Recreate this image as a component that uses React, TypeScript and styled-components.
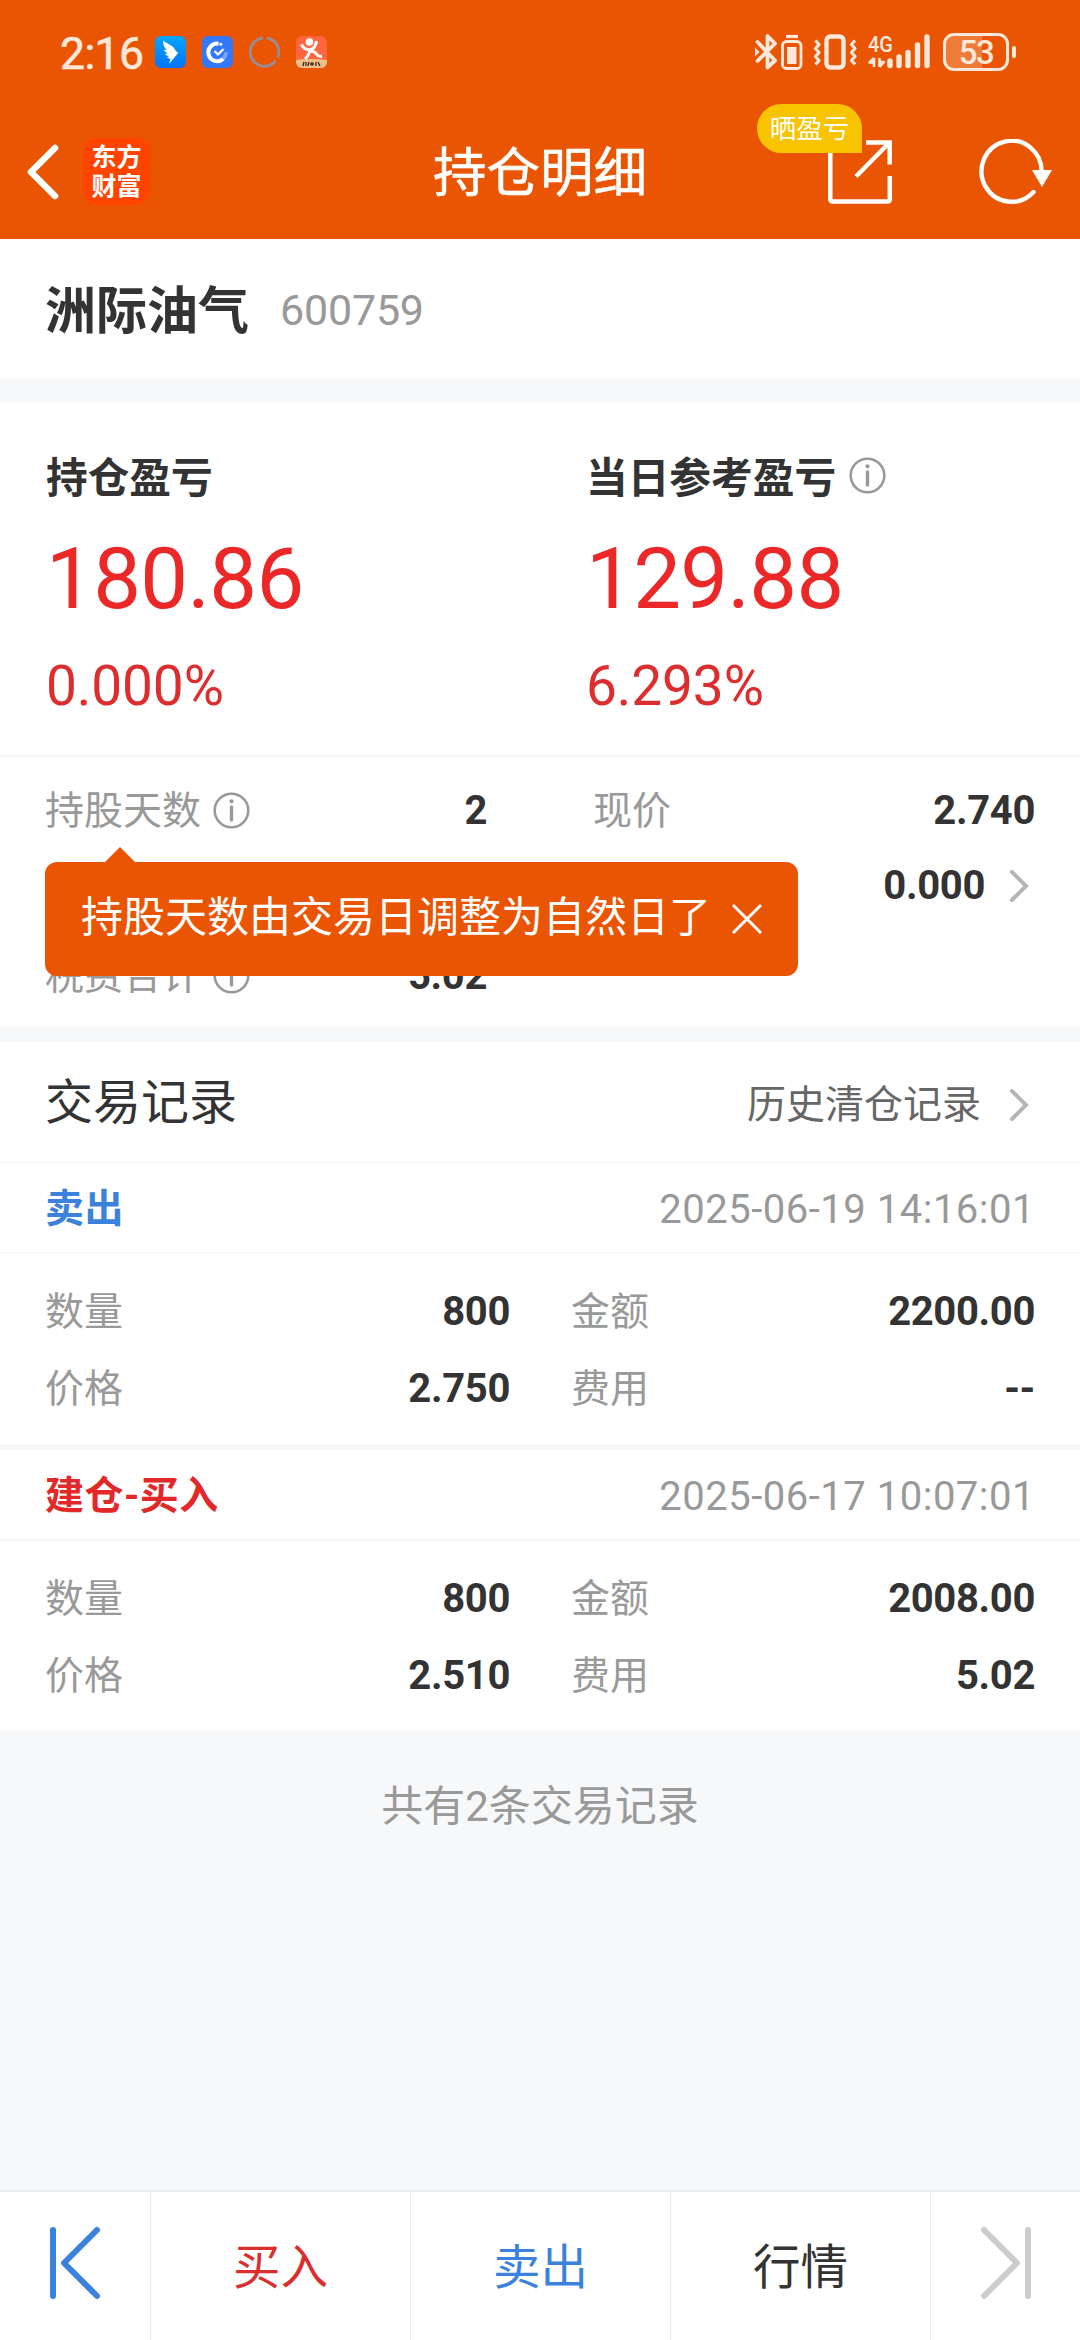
import React from "react";
import styled, { createGlobalStyle } from "styled-components";

const FONT = `Roboto, "Noto Sans CJK SC", sans-serif`;
const ORANGE = "#ea5504";
const RED = "#ec2727";
const BLUE = "#3a82dc";
const INK = "#333333";
const MUTED = "#999999";
const PAPER = "#ffffff";
const GAP = "#f6f8fa";
const HAIR = "#f7f8f9";
const STATUS = "#fee8da";

const GlobalStyle = createGlobalStyle`
  *, *::before, *::after { box-sizing: border-box; }
  html, body { margin: 0; padding: 0; background: ${GAP}; }
  body { font-family: ${FONT}; color: ${INK}; }
  svg { display: block; flex: none; }
  button { font: inherit; color: inherit; background: none; border: 0; padding: 0; margin: 0; }
`;

const Screen = styled.main`
  width: 1080px;
  height: 2340px;
  display: flex;
  flex-direction: column;
  background: ${GAP};
  overflow: hidden;
`;

const Header = styled.header`
  height: 239px;
  flex: none;
  background: ${ORANGE};
  color: ${PAPER};
`;

const StatusBar = styled.div`
  height: 104px;
  padding: 0 64px 0 60px;
  display: flex;
  justify-content: space-between;
  align-items: center;
  color: ${STATUS};
`;

const StatusSide = styled.div<{ $gap: number }>`
  display: flex;
  align-items: center;
  gap: ${(p) => p.$gap}px;
`;

const Clock = styled.time`
  width: 95px;
  font-size: 44.5px;
  line-height: 52px;
  padding-top: 3px;
  letter-spacing: -0.6px;
  -webkit-text-stroke: 0.6px ${STATUS};
  white-space: nowrap;
`;

const Battery = styled.div`
  width: 66px;
  height: 38px;
  border: 3px solid ${STATUS};
  border-radius: 11px;
  background: linear-gradient(90deg, #ee7b39 0 60%, transparent 60%);
  font-size: 33px;
  font-weight: 500;
  line-height: 33px;
  text-align: center;
  letter-spacing: -1.5px;
`;

const BatteryWrap = styled.div`
  display: flex;
  align-items: center;
  gap: 3px;
  margin-left: 12px;
`;

const BatteryTip = styled.span`
  width: 4px;
  height: 12px;
  border-radius: 2px;
  background: ${STATUS};
`;

const NavBar = styled.div`
  height: 135px;
  display: grid;
  grid-template-columns: 400px 1fr 400px;
  align-items: center;
`;

const NavLeft = styled.div`
  display: flex;
  align-items: center;
  gap: 22px;
  padding-left: 26px;
`;

const NavRight = styled.div`
  display: flex;
  align-items: center;
  justify-content: flex-end;
  gap: 87px;
  padding-right: 27px;
`;

const Title = styled.h1`
  margin: 0;
  padding-top: 5px;
  text-align: center;
  font-size: 53.5px;
  line-height: 70px;
  font-weight: 400;
  -webkit-text-stroke: 0.6px ${PAPER};
  white-space: nowrap;
`;

const Brand = styled.div`
  width: 67px;
  height: 67px;
  border-radius: 14px;
  background: #ff4400;
  display: flex;
  flex-direction: column;
  align-items: center;
  justify-content: center;
  font-size: 25px;
  line-height: 29px;
  font-weight: 700;
`;

const ShareButton = styled.button`
  position: relative;
`;

const Badge = styled.span`
  position: absolute;
  right: 30px;
  top: -36px;
  width: 105px;
  height: 49px;
  border-radius: 25px 25px 0 25px;
  background: #f8c301;
  color: ${PAPER};
  font-size: 26.5px;
  line-height: 49px;
  text-align: center;
  white-space: nowrap;
`;

const StockBar = styled.section`
  height: 140px;
  flex: none;
  display: flex;
  align-items: center;
  gap: 31px;
  padding: 0 45px;
  background: ${PAPER};
`;

const StockName = styled.h2`
  margin: 0;
  padding-top: 5px;
  font-size: 51px;
  line-height: 60px;
  font-weight: 700;
`;

const StockCode = styled.span`
  font-size: 43px;
  line-height: 60px;
  letter-spacing: -0.2px;
  padding-top: 2px;
  color: ${MUTED};
`;

const Holding = styled.section`
  margin-top: 24px;
  height: 624px;
  flex: none;
  background: ${PAPER};
`;

const ProfitGrid = styled.div`
  height: 354px;
  display: grid;
  grid-template-columns: 540px 540px;
  border-bottom: 2px solid ${HAIR};
`;

const ProfitCell = styled.div`
  padding: 42px 0 0 46px;
`;

const ProfitLabel = styled.div`
  height: 60px;
  display: flex;
  align-items: center;
  gap: 13px;
  font-size: 41.7px;
  font-weight: 700;
`;

const ProfitValue = styled.div`
  height: 100px;
  margin-top: 24px;
  font-size: 85px;
  line-height: 100px;
  letter-spacing: -0.6px;
  color: ${RED};
`;

const ProfitRate = styled.div`
  margin-top: 24px;
  font-size: 55px;
  line-height: 66px;
  letter-spacing: -0.1px;
  color: #dc2e2e;
`;

const Details = styled.div`
  position: relative;
  display: grid;
  grid-template-columns: 442px 442px;
  grid-template-rows: 75px 75px 105px;
  column-gap: 106px;
  padding: 16px 45px 0;
`;

const DetailRow = styled.div<{ $col: number; $row: number }>`
  grid-column: ${(p) => p.$col};
  grid-row: ${(p) => p.$row};
  display: flex;
  align-items: center;
  justify-content: space-between;
`;

const Label = styled.span`
  display: flex;
  align-items: center;
  gap: 12px;
  font-size: 39px;
  line-height: 56px;
  color: ${MUTED};
`;

const Value = styled.span`
  display: flex;
  align-items: center;
  margin-left: auto;
  padding-top: 1px;
  font-size: 40px;
  line-height: 56px;
  font-weight: 700;
  letter-spacing: -0.35px;
`;

const ArrowSlot = styled.span`
  display: flex;
  margin: 0 6px 0 24px;
`;

const Tooltip = styled.div`
  position: absolute;
  left: 45px;
  top: 105px;
  width: 753px;
  height: 114px;
  border-radius: 12px;
  background: ${ORANGE};
  color: ${PAPER};
  display: flex;
  align-items: center;
  justify-content: space-between;
  padding: 0 35px 0 36px;
  white-space: nowrap;

  &::before {
    content: "";
    position: absolute;
    left: 60px;
    top: -15px;
    border: 15px solid transparent;
    border-top: 0;
    border-bottom-color: ${ORANGE};
  }
`;

const TooltipText = styled.span`
  font-size: 42px;
  line-height: 60px;
  padding-bottom: 2px;
`;

const Records = styled.section`
  margin-top: 15px;
  flex: none;
`;

const RecordsHead = styled.div`
  height: 121px;
  display: flex;
  align-items: center;
  justify-content: space-between;
  padding: 2px 51px 0 45px;
  background: ${PAPER};
  border-bottom: 2px solid ${HAIR};
`;

const RecordsTitle = styled.h3`
  margin: 0;
  font-size: 48px;
  line-height: 60px;
  font-weight: 400;
`;

const HistoryLink = styled.a`
  display: flex;
  align-items: center;
  gap: 28px;
  font-size: 39px;
  line-height: 56px;
  color: #666666;
  padding-top: 4px;
`;

const RecordCard = styled.article`
  background: ${PAPER};

  & + & {
    margin-top: 6px;
  }
`;

const RecordTop = styled.div`
  height: 91px;
  display: flex;
  align-items: center;
  justify-content: space-between;
  padding: 0 45px;
  border-bottom: 2px solid ${HAIR};
`;

const Kind = styled.span<{ $tone: string }>`
  font-size: 39px;
  line-height: 56px;
  font-weight: 700;
  letter-spacing: 0.5px;
  padding-top: 2px;
  color: ${(p) => p.$tone};
`;

const Stamp = styled.time`
  font-size: 40px;
  line-height: 56px;
  padding-top: 4px;
  letter-spacing: 0.5px;
  color: ${MUTED};
`;

const RecordGrid = styled.div`
  height: 190px;
  display: grid;
  grid-template-columns: 465px 464px;
  grid-auto-rows: 77px;
  column-gap: 61px;
  padding: 19px 45px 0;
`;

const RecordItem = styled.div`
  display: flex;
  align-items: center;
`;

const Summary = styled.p`
  margin: 47px 0 0;
  flex: 1;
  text-align: center;
  font-size: 42px;
  line-height: 58px;
  color: ${MUTED};
`;

const BottomBar = styled.nav`
  height: 150px;
  flex: none;
  display: grid;
  grid-template-columns: 151px 260px 260px 260px 1fr;
  background: ${PAPER};
  border-top: 2px solid #e9ebed;
`;

const BottomItem = styled.button<{ $tone: string }>`
  display: flex;
  align-items: center;
  justify-content: center;
  padding-bottom: 6px;
  font-size: 47.5px;
  color: ${(p) => p.$tone};
  border-right: 1.5px solid #e9ebed;

  &:last-child {
    border-right: 0;
  }
`;

const InfoIcon = () => (
  <svg width="37" height="37" viewBox="0 0 37 37" fill="none" stroke={MUTED} strokeWidth="2.6">
    <circle cx="18.5" cy="18.5" r="16.8" />
    <path d="M18.5 15v13" strokeWidth="3.4" strokeLinecap="round" />
    <circle cx="18.5" cy="9.3" r="2.1" fill={MUTED} stroke="none" />
  </svg>
);

const Chevron = () => (
  <svg width="20" height="34" viewBox="0 0 20 34" fill="none" stroke="#b5b5b5" strokeWidth="4" strokeLinecap="round">
    <path d="M3 3l14 14L3 31" />
  </svg>
);

const items = (qty: string, sum: string, price: string, fee: string) => [
  ["数量", qty],
  ["金额", sum],
  ["价格", price],
  ["费用", fee],
];

const records = [
  { kind: "卖出", tone: BLUE, at: "2025-06-19 14:16:01", items: items("800", "2200.00", "2.750", "--") },
  { kind: "建仓-买入", tone: "#e22828", at: "2025-06-17 10:07:01", items: items("800", "2008.00", "2.510", "5.02") },
];

const NoticeIcons = () => (
  <StatusSide $gap={16}>
    <svg width="31" height="32" viewBox="0 0 31 32">
      <defs>
        <linearGradient id="wing" x1="0" y1="0" x2="0" y2="1">
          <stop offset="0" stopColor="#03a5fd" />
          <stop offset="1" stopColor="#0573fb" />
        </linearGradient>
      </defs>
      <rect width="31" height="32" rx="6" fill="url(#wing)" />
      <path d="M8 4.500c2 2 11 5 12.500 10 .5 1.200 2.500 1.500 2.500 2.500l-3.500 4.500L14 28l1.500-5-4-1.500 2.500-.8-4.500-2.700 3-.5-4-3.500 3 0Q8 10 8 4.500z" fill="#fff" />
    </svg>
    <svg width="31" height="32" viewBox="0 0 31 32" fill="none">
      <rect width="31" height="32" rx="6" fill="#3478fa" />
      <path d="M16.500 7.700a8.800 8.800 0 1 0 4.500 15.300" stroke="#fff" strokeWidth="4" />
      <path d="M20.500 23.300a8.800 8.800 0 0 0 3.400-7" stroke="#fff" strokeWidth="3.600" opacity=".35" />
      <path d="M12.500 15l3.500 3.500 5.500-5.500" stroke="#fff" strokeWidth="2.200" />
      <circle cx="18.800" cy="8.300" r="1.500" fill="#fff" />
    </svg>
    <svg width="31" height="32" viewBox="0 0 31 32" fill="none" stroke="#9a8a92" strokeWidth="3">
      <path d="M18 1.900A14.200 14.200 0 0 1 28.700 21.500M26.500 25A14.200 14.200 0 1 1 14 1.900" />
    </svg>
    <svg width="31" height="32" viewBox="0 0 31 32" fill="none">
      <rect width="31" height="32" rx="6" fill="#fe6640" />
      <path d="M0 24q15-2 31 0v2a6 6 0 0 1-6 6H6a6 6 0 0 1-6-6z" fill="#ecc08c" />
      <circle cx="13.500" cy="6" r="3.800" fill="#fff" />
      <path d="M5.500 8.500q3 6 9 5 5-1 6-8.500M14 13q-.5 6-5 10M14 15q4.500 0 6.500 3 2 3 5.500 2" stroke="#fff" strokeWidth="3" />
      <path d="M8 26l-1 4M10 26v4M13 26l-1 4M16 26v4M14 28h4M20 26v4M22 26l2 4" stroke="#3d2414" strokeWidth="1.300" />
    </svg>
  </StatusSide>
);

const SignalIcons = () => (
  <svg width="176" height="50" viewBox="0 -6 176 50" fill="none" stroke={STATUS} strokeLinejoin="round">
    <path d="M2.500 9l17.500 18.500-7.500 7V3L20 10.500 2.500 28" strokeWidth="3.800" strokeLinecap="round" />
    <path d="M0 14.500l4.500 4.500L0 23.500z" fill={STATUS} stroke="none" />
    <rect x="27.500" y="8.500" width="18.500" height="27" rx="4" strokeWidth="2.800" />
    <path d="M31 3.500h12" strokeWidth="3.200" />
    <rect x="32" y="14" width="9.500" height="17" fill={STATUS} stroke="none" />
    <rect x="71.500" y="3.500" width="17" height="31" rx="4" strokeWidth="4.400" />
    <path d="M60.500 7.500l3.500 4-3.500 4 3.500 4-3.500 4 3.500 4-3.500 4M100 7.500l-3.500 4 3.500 4-3.500 4 3.500 4-3.500 4 3.500 4" strokeWidth="3.200" />
    <path d="M119 25v9M119 25l-4.500 4.500h4.500M124.500 25v9M124.500 34l4.500-5h-4.500" strokeWidth="2.600" />
    <path d="M135 28v4.500M144 24v8.500M153 19.500v13M162.500 12v20.500M172 4v28.500" strokeWidth="5.400" strokeLinecap="round" />
    <text x="113" y="18.500" fontSize="22.500" fontWeight="500" textLength="25" lengthAdjust="spacingAndGlyphs" fill={STATUS} stroke="none">
      4G
    </text>
  </svg>
);

export default function App() {
  return (
    <Screen>
      <GlobalStyle />
      <Header>
        <StatusBar>
          <StatusSide $gap={0}>
            <Clock>2:16</Clock>
            <NoticeIcons />
          </StatusSide>
          <StatusSide $gap={0}>
            <SignalIcons />
            <BatteryWrap>
              <Battery>53</Battery>
              <BatteryTip />
            </BatteryWrap>
          </StatusSide>
        </StatusBar>
        <NavBar>
          <NavLeft>
            <svg width="35" height="58" viewBox="0 0 35 58" fill="none" stroke="#fff" strokeWidth="6.500" strokeLinecap="round" strokeLinejoin="round">
              <path d="M29 5L5 29l24 24" />
            </svg>
            <Brand>
              <span>东方</span>
              <span>财富</span>
            </Brand>
          </NavLeft>
          <Title>持仓明细</Title>
          <NavRight>
            <ShareButton aria-label="晒盈亏">
              <svg width="64" height="64" viewBox="0 0 64 64" fill="none" stroke="#fff" strokeWidth="4.500">
                <path d="M2.300 10v49q0 2.500 2.500 2.500h54.500q2.500 0 2.500-2.500V36" />
                <path d="M38 2.500h23.700v22M61 3L28 36.500" />
              </svg>
              <Badge>晒盈亏</Badge>
            </ShareButton>
            <svg width="74" height="66" viewBox="0 0 74 66" fill="none" stroke="#fff" strokeWidth="4.400">
              <path d="M62.500 34A30 30.500 0 1 0 54.500 53" strokeLinecap="round" />
              <path d="M53 31h20l-10 17z" fill="#fff" stroke="none" />
            </svg>
          </NavRight>
        </NavBar>
      </Header>

      <StockBar>
        <StockName>洲际油气</StockName>
        <StockCode>600759</StockCode>
      </StockBar>

      <Holding>
        <ProfitGrid>
          <ProfitCell>
            <ProfitLabel>持仓盈亏</ProfitLabel>
            <ProfitValue>180.86</ProfitValue>
            <ProfitRate>0.000%</ProfitRate>
          </ProfitCell>
          <ProfitCell>
            <ProfitLabel>
              当日参考盈亏
              <InfoIcon />
            </ProfitLabel>
            <ProfitValue>129.88</ProfitValue>
            <ProfitRate>6.293%</ProfitRate>
          </ProfitCell>
        </ProfitGrid>
        <Details>
          <DetailRow $col={1} $row={1}>
            <Label>
              持股天数
              <InfoIcon />
            </Label>
            <Value>2</Value>
          </DetailRow>
          <DetailRow $col={2} $row={1}>
            <Label>现价</Label>
            <Value>2.740</Value>
          </DetailRow>
          <DetailRow $col={2} $row={2}>
            <Value>
              0.000
              <ArrowSlot>
                <Chevron />
              </ArrowSlot>
            </Value>
          </DetailRow>
          <DetailRow $col={1} $row={3}>
            <Label>
              税费合计
              <InfoIcon />
            </Label>
            <Value>5.02</Value>
          </DetailRow>
          <Tooltip>
            <TooltipText>持股天数由交易日调整为自然日了</TooltipText>
            <svg width="32" height="32" viewBox="0 0 32 32" fill="none" stroke="#fff" strokeWidth="3">
              <path d="M2 2l28 28M30 2L2 30" />
            </svg>
          </Tooltip>
        </Details>
      </Holding>

      <Records>
        <RecordsHead>
          <RecordsTitle>交易记录</RecordsTitle>
          <HistoryLink>
            历史清仓记录
            <Chevron />
          </HistoryLink>
        </RecordsHead>
        {records.map((r) => (
          <RecordCard key={r.at}>
            <RecordTop>
              <Kind $tone={r.tone}>{r.kind}</Kind>
              <Stamp>{r.at}</Stamp>
            </RecordTop>
            <RecordGrid>
              {r.items.map(([k, v]) => (
                <RecordItem key={k}>
                  <Label>{k}</Label>
                  <Value>{v}</Value>
                </RecordItem>
              ))}
            </RecordGrid>
          </RecordCard>
        ))}
      </Records>

      <Summary>共有2条交易记录</Summary>

      <BottomBar>
        <BottomItem $tone={BLUE} aria-label="上一个">
          <svg width="52" height="74" viewBox="0 0 52 74" fill="none" stroke={BLUE} strokeWidth="6" strokeLinecap="round" strokeLinejoin="round">
            <path d="M4 4v66M48 4L15 37l33 33" />
          </svg>
        </BottomItem>
        <BottomItem $tone="#d92f2f">买入</BottomItem>
        <BottomItem $tone={BLUE}>卖出</BottomItem>
        <BottomItem $tone={INK}>行情</BottomItem>
        <BottomItem $tone="#cccccc" aria-label="下一个">
          <svg width="52" height="74" viewBox="0 0 52 74" fill="none" stroke="#cccccc" strokeWidth="6" strokeLinecap="round" strokeLinejoin="round">
            <path d="M48 4v66M4 4l33 33L4 70" />
          </svg>
        </BottomItem>
      </BottomBar>
    </Screen>
  );
}
